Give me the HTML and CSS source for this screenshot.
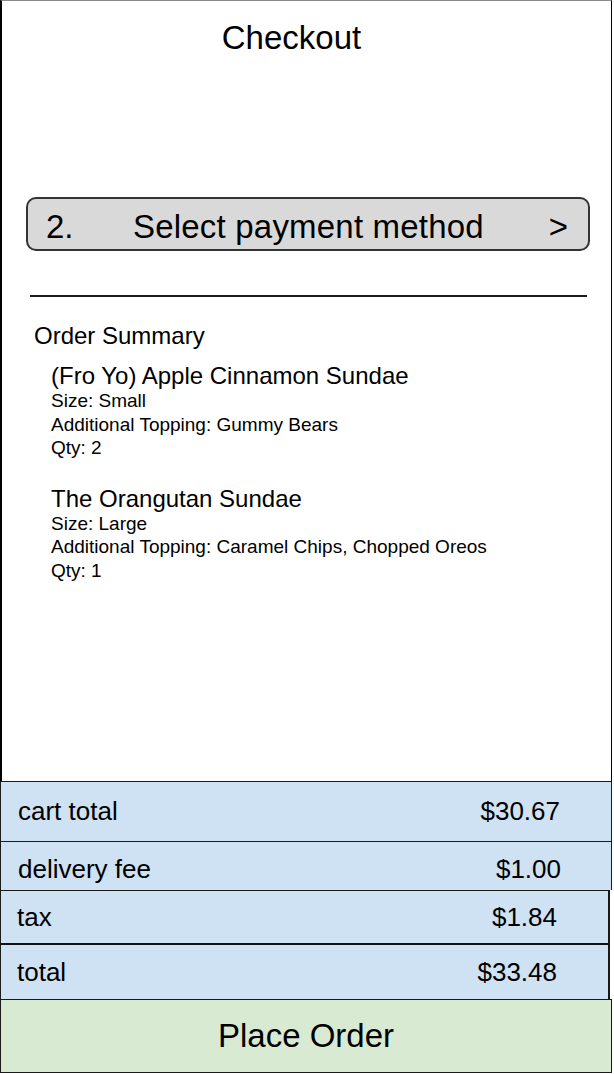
FILE: index.html
```html
<!DOCTYPE html>
<html lang="en">
<head>
<meta charset="utf-8">
<title>Checkout</title>
<link rel="stylesheet" href="styles.css">
</head>
<body>
<div class="screen">
  <main class="panel">
    <h1 class="title">Checkout</h1>
    <button class="step" type="button">
      <span class="step-num">2.</span>
      <span class="step-label">Select payment method</span>
      <span class="step-arrow">&gt;</span>
    </button>
    <hr class="divider">
    <section class="summary">
      <h2 class="summary-title">Order Summary</h2>
      <div class="item">
        <div class="item-name">(Fro Yo) Apple Cinnamon Sundae</div>
        <div class="item-line">Size: Small</div>
        <div class="item-line">Additional Topping: Gummy Bears</div>
        <div class="item-line">Qty: 2</div>
      </div>
      <div class="item">
        <div class="item-name">The Orangutan Sundae</div>
        <div class="item-line">Size: Large</div>
        <div class="item-line">Additional Topping: Caramel Chips, Chopped Oreos</div>
        <div class="item-line">Qty: 1</div>
      </div>
    </section>
  </main>
  <div class="totals">
    <div class="row row-cart"><span>cart total</span><span>$30.67</span></div>
    <div class="row row-delivery"><span>delivery fee</span><span>$1.00</span></div>
    <div class="row row-narrow row-tax"><span>tax</span><span>$1.84</span></div>
    <div class="row row-narrow row-total"><span>total</span><span>$33.48</span></div>
  </div>
  <button class="place" type="button">Place Order</button>
</div>
</body>
</html>
```

FILE: styles.css
```css
* {
  box-sizing: border-box;
}

html, body {
  margin: 0;
  padding: 0;
  background: #ffffff;
}

body {
  font-family: "Liberation Sans", Arial, sans-serif;
  color: #000000;
}

.screen {
  width: 612px;
  display: flex;
  flex-direction: column;
}

.panel {
  height: 781px;
  border: 1px solid #000000;
  border-top-color: #8a8a8a;
  border-bottom: none;
  border-left-width: 2px;
  display: flex;
  flex-direction: column;
}

.title {
  margin: 18px 0 0 0;
  padding-right: 30px;
  font-size: 33px;
  line-height: 38px;
  font-weight: normal;
  text-align: center;
}

.step {
  margin: 140px 21px 0 24px;
  height: 54px;
  padding: 5px 20px 0 18px;
  display: flex;
  align-items: center;
  background: #d9d9d9;
  border: 2px solid #333333;
  border-radius: 10px;
  font-family: inherit;
  font-size: 33px;
  color: #000000;
  text-align: left;
}

.step-num {
  width: 87px;
  flex: none;
}

.step-label {
  letter-spacing: 0.2px;
}

.step-arrow {
  margin-left: auto;
}

.divider {
  margin: 44px 0 0 28px;
  width: 557px;
  height: 2px;
  border: none;
  background: #1a1a1a;
}

.summary {
  margin-top: 25px;
  padding-left: 32px;
}

.summary-title {
  margin: 0;
  font-size: 24px;
  line-height: 28px;
  font-weight: normal;
}

.item {
  margin-top: 13px;
  padding-left: 17px;
}

.item + .item {
  margin-top: 26px;
}

.item-name {
  font-size: 24px;
  line-height: 26px;
}

.item-line {
  font-size: 19px;
  line-height: 23.5px;
}

.totals {
  display: flex;
  flex-direction: column;
}

.row {
  display: flex;
  align-items: center;
  justify-content: space-between;
  background: #cfe2f3;
  border: 1px solid #1a1a1a;
  border-bottom: none;
  font-size: 26px;
  padding: 0 51px 0 17px;
}

.row-cart {
  width: 612px;
  height: 60px;
}

.row-delivery {
  width: 612px;
  height: 49px;
  padding-top: 7px;
  padding-right: 50px;
}

.row-narrow {
  width: 610px;
  padding-left: 16px;
  padding-right: 51px;
}

.row-tax {
  height: 55px;
  border-right-width: 2px;
  border-bottom: 2px solid #111111;
}

.row-total {
  height: 54px;
  border-top: none;
  border-right-width: 2px;
}

.place {
  width: 612px;
  height: 74px;
  margin: 0;
  padding: 0;
  background: #d9ead3;
  border: 1px solid #1a1a1a;
  font-family: inherit;
  font-size: 33px;
  color: #000000;
  text-align: center;
}
```
